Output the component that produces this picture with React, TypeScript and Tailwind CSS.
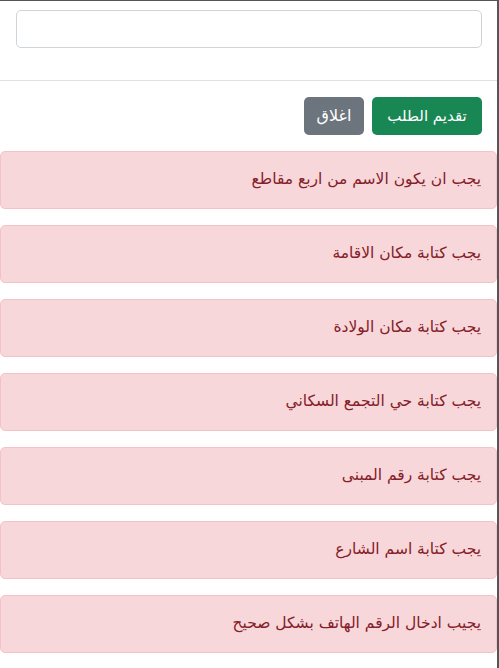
import React from "react";

const errors = [
  "يجب ان يكون الاسم من اربع مقاطع",
  "يجب كتابة مكان الاقامة",
  "يجب كتابة مكان الولادة",
  "يجب كتابة حي التجمع السكاني",
  "يجب كتابة رقم المبنى",
  "يجب كتابة اسم الشارع",
  "يجيب ادخال الرقم الهاتف بشكل صحيح",
];

export default function App() {
  return (
    <div
      dir="rtl"
      className="w-[499px] h-[668px] overflow-hidden bg-white border-t border-r-2 border-[#555555]"
      style={{ fontFamily: '"DejaVu Sans", "Noto Sans", sans-serif' }}
    >
      <div className="pt-[9px] pb-[32px] pr-[15px] pl-4">
        <input
          className="block w-full h-[38px] rounded-[5px] border border-[#ced4da] bg-white outline-none"
          aria-label="input"
        />
      </div>
      <div className="border-t border-[#dee2e6] flex justify-start gap-2 pt-4 pb-[16px] pr-[15px]">
        <button className="h-[38px] w-[110px] rounded-[5px] bg-[#198754] text-white text-[15px] leading-6">
          تقديم الطلب
        </button>
        <button className="h-[38px] w-[60px] rounded-[5px] bg-[#6c757d] text-white text-[16px] leading-6">
          اغلاق
        </button>
      </div>
      <div className="flex flex-col gap-4">
        {errors.map((e) => (
          <div
            key={e}
            className="h-[58px] flex items-center px-[15px] rounded-[5px] border border-[#f5c2c7] bg-[#f8d7da] text-[#842029] text-[15.5px]"
          >
            {e}
          </div>
        ))}
      </div>
    </div>
  );
}
